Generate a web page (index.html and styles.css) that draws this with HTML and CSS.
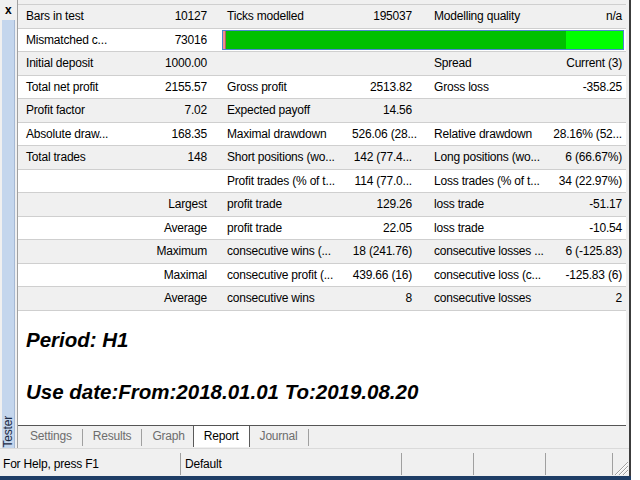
FILE: index.html
```html
<!DOCTYPE html>
<html>
<head>
<meta charset="utf-8">
<title>Tester Report</title>
<link rel="stylesheet" href="styles.css">
</head>
<body>
<div class="window">
  <div class="frame">
    <div class="main">
      <div class="sidebar">
        <div class="close">x</div>
        <div class="vtab"><span class="vtab-label">Tester</span></div>
      </div>
      <div class="panel">
        <div class="report">
          <div class="table">
            <div class="row">
              <div class="l1">Bars in test</div><div class="v1">10127</div>
              <div class="l2">Ticks modelled</div><div class="v2">195037</div>
              <div class="l3">Modelling quality</div><div class="v3">n/a</div>
            </div>
            <div class="row alt">
              <div class="l1">Mismatched c...</div><div class="v1">73016</div>
              <div class="bar"><div class="bar-err"></div><div class="bar-main"></div><div class="bar-hi"></div></div>
            </div>
            <div class="row">
              <div class="l1">Initial deposit</div><div class="v1">1000.00</div>
              <div class="l2"></div><div class="v2"></div>
              <div class="l3">Spread</div><div class="v3">Current (3)</div>
            </div>
            <div class="row alt">
              <div class="l1">Total net profit</div><div class="v1">2155.57</div>
              <div class="l2">Gross profit</div><div class="v2">2513.82</div>
              <div class="l3">Gross loss</div><div class="v3">-358.25</div>
            </div>
            <div class="row">
              <div class="l1">Profit factor</div><div class="v1">7.02</div>
              <div class="l2">Expected payoff</div><div class="v2">14.56</div>
              <div class="l3"></div><div class="v3"></div>
            </div>
            <div class="row alt">
              <div class="l1">Absolute draw...</div><div class="v1">168.35</div>
              <div class="l2">Maximal drawdown</div><div class="v2">526.06 (28...</div>
              <div class="l3">Relative drawdown</div><div class="v3">28.16% (52...</div>
            </div>
            <div class="row">
              <div class="l1">Total trades</div><div class="v1">148</div>
              <div class="l2">Short positions (wo...</div><div class="v2">142 (77.4...</div>
              <div class="l3">Long positions (wo...</div><div class="v3">6 (66.67%)</div>
            </div>
            <div class="row alt">
              <div class="l1"></div><div class="v1"></div>
              <div class="l2">Profit trades (% of t...</div><div class="v2">114 (77.0...</div>
              <div class="l3">Loss trades (% of t...</div><div class="v3">34 (22.97%)</div>
            </div>
            <div class="row">
              <div class="l1"></div><div class="v1">Largest</div>
              <div class="l2">profit trade</div><div class="v2">129.26</div>
              <div class="l3">loss trade</div><div class="v3">-51.17</div>
            </div>
            <div class="row alt">
              <div class="l1"></div><div class="v1">Average</div>
              <div class="l2">profit trade</div><div class="v2">22.05</div>
              <div class="l3">loss trade</div><div class="v3">-10.54</div>
            </div>
            <div class="row">
              <div class="l1"></div><div class="v1">Maximum</div>
              <div class="l2">consecutive wins (...</div><div class="v2">18 (241.76)</div>
              <div class="l3">consecutive losses ...</div><div class="v3">6 (-125.83)</div>
            </div>
            <div class="row alt">
              <div class="l1"></div><div class="v1">Maximal</div>
              <div class="l2">consecutive profit (...</div><div class="v2">439.66 (16)</div>
              <div class="l3">consecutive loss (c...</div><div class="v3">-125.83 (6)</div>
            </div>
            <div class="row">
              <div class="l1"></div><div class="v1">Average</div>
              <div class="l2">consecutive wins</div><div class="v2">8</div>
              <div class="l3">consecutive losses</div><div class="v3">2</div>
            </div>
          </div>
          <div class="notes">
            <p class="note note-first">Period: H1</p>
            <p class="note note-second">Use date:From:2018.01.01 To:2019.08.20</p>
          </div>
        </div>
        <div class="tabs">
          <div class="tab">Settings</div>
          <div class="sep"></div>
          <div class="tab">Results</div>
          <div class="sep"></div>
          <div class="tab">Graph</div>
          <div class="tab active">Report</div>
          <div class="tab">Journal</div>
          <div class="sep"></div>
        </div>
      </div>
    </div>
    <div class="status">
      <div class="cell cell-help">For Help, press F1</div>
      <div class="cell cell-profile">Default</div>
      <div class="cell cell-a"></div>
      <div class="cell cell-b"></div>
      <div class="cell cell-c"></div>
      <div class="grip">
        <svg width="14" height="14" viewBox="0 0 14 14">
          <g stroke="#a0a0a0" stroke-width="1">
            <line x1="14" y1="1" x2="1" y2="14"/>
            <line x1="14" y1="5" x2="5" y2="14"/>
            <line x1="14" y1="9" x2="9" y2="14"/>
          </g>
          <g stroke="#ffffff" stroke-width="1">
            <line x1="14" y1="2" x2="2" y2="14"/>
            <line x1="14" y1="6" x2="6" y2="14"/>
            <line x1="14" y1="10" x2="10" y2="14"/>
          </g>
        </svg>
      </div>
    </div>
  </div>
  <div class="band"></div>
</div>
</body>
</html>
```

FILE: styles.css
```css
* { box-sizing: border-box; }
html, body { margin: 0; padding: 0; background: #ffffff; }
body {
  width: 640px;
  height: 480px;
  overflow: hidden;
  font-family: "Liberation Sans", Arial, sans-serif;
  font-size: 12px;
  letter-spacing: -0.2px;
  color: #000;
}
.window { width: 631px; height: 480px; display: flex; flex-direction: column; }
.frame {
  height: 476px;
  border-right: 2px solid #3c3c3c;
  background: #f0f0f0;
  display: flex;
  flex-direction: column;
}
.main { height: 448px; display: flex; }

.sidebar {
  width: 18px;
  border-right: 1px solid #a0a0a0;
  display: flex;
  flex-direction: column;
}
.close {
  height: 20px;
  font-weight: bold;
  font-size: 12px;
  line-height: 20px;
  padding-left: 5px;
}
.vtab {
  flex: 1;
  margin-left: 2px;
  width: 13px;
  background: #c4d6ed;
  border-right: 1px solid #a6b9d4;
  display: flex;
  flex-direction: column;
  justify-content: flex-end;
  align-items: center;
  padding-bottom: 1px;
}
.vtab-label {
  writing-mode: vertical-rl;
  transform: rotate(180deg);
  font-size: 12px;
  line-height: 12px;
  color: #1b2a44;
}

.panel {
  width: 611px;
  padding: 4px 3px 0 0;
  display: flex;
  flex-direction: column;
}
.report {
  height: 422px;
  background: #ffffff;
  border-top: 1px solid #cfcfcf;
  border-bottom: 1px solid #555555;
  display: flex;
  flex-direction: column;
}
.row {
  display: grid;
  grid-template-columns: 127px 67px 140px 65px 131px 78px;
  height: 23.5px;
  border-bottom: 1px solid #cfcfcf;
  align-items: center;
  background: #f0f0f0;
  white-space: nowrap;
}
.row.alt { background: #ffffff; }
.l1 { padding-left: 8px; }
.v1 { text-align: right; padding-right: 5px; }
.l2 { padding-left: 15px; }
.v2 { text-align: right; padding-right: 5px; }
.l3 { padding-left: 17px; }
.v3 { text-align: right; padding-right: 4px; }

.bar {
  grid-column: 3 / 7;
  margin: 0 2px 0 10px;
  height: 20px;
  border: 1px solid #4a86d0;
  display: flex;
}
.bar-err { width: 3px; background: #ee8f8f; border-right: 1px solid #b06060; }
.bar-main { width: 340px; background: #00c000; }
.bar-hi { flex: 1; background: #00ff00; }

.notes { flex: 1; padding-left: 8px; }
.note {
  margin: 0;
  font-size: 20.5px;
  font-weight: bold;
  font-style: italic;
  line-height: 24px;
  letter-spacing: 0;
}
.note-first { margin-top: 17.5px; }
.note-second { margin-top: 28px; }

.tabs {
  height: 22px;
  display: flex;
  align-items: stretch;
  padding-left: 2px;
  color: #6d6d6d;
}
.tab { padding: 0 10px; line-height: 21px; }
.sep { width: 1px; background: #a0a0a0; margin: 3px 0 2px; }
.tab.active {
  color: #000;
  background: #ffffff;
  border-left: 1px solid #5a5a5a;
  border-right: 1px solid #5a5a5a;
  padding: 0 10px 0 10px;
  margin-left: -2px;
  margin-bottom: 1px;
}

.status {
  height: 28px;
  border-top: 1px solid #dadada;
  display: flex;
  padding: 4px 0 1px 0;
}
.cell { border-right: 1px solid #a0a0a0; line-height: 22px; white-space: nowrap; }
.cell-help { width: 181px; padding-left: 3px; }
.cell-profile { width: 221px; padding-left: 4px; }
.cell-a { width: 72px; }
.cell-b { width: 72px; }
.cell-c { width: 67px; }
.grip { flex: 1; display: flex; justify-content: flex-end; align-items: flex-end; padding-right: 1px; }
.grip svg { display: block; }

.band { height: 4px; background: #1f3e66; }
```
